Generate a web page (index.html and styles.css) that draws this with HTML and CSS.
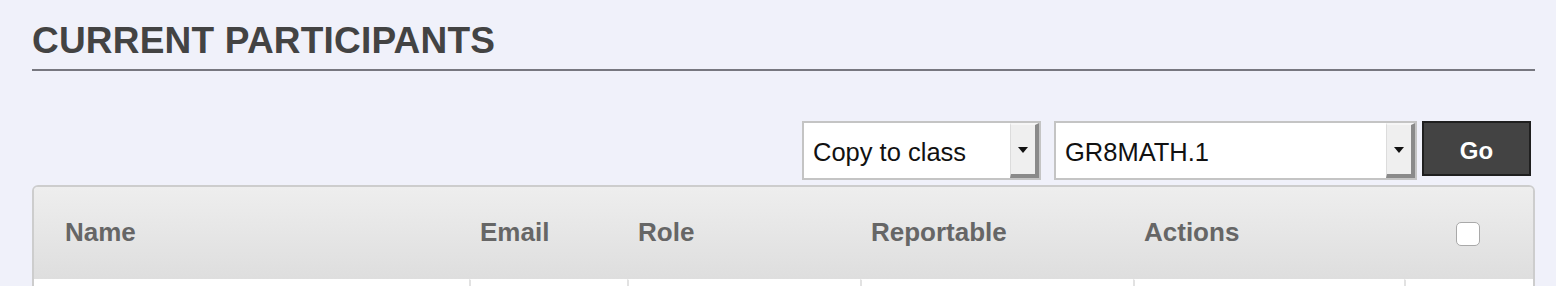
FILE: index.html
```html
<!DOCTYPE html>
<html lang="en">
<head>
  <meta charset="UTF-8">
  <title>Current Participants</title>
  <meta name="viewport" content="width=device-width, initial-scale=1.0">
  <link rel="stylesheet" href="styles.css">
</head>
<body>

<h2 class="titulo">CURRENT PARTICIPANTS</h2>

<div class="barra">
  <div class="selector selector-accion">
    <span class="selector-texto">Copy to class</span>
    <span class="selector-flecha"></span>
  </div>
  <div class="selector selector-clase">
    <span class="selector-texto">GR8MATH.1</span>
    <span class="selector-flecha"></span>
  </div>
  <button class="boton-go">Go</button>
</div>

<table class="participantes">
  <colgroup>
    <col class="col-nombre">
    <col class="col-email">
    <col class="col-rol">
    <col class="col-reportable">
    <col class="col-acciones">
    <col class="col-check">
  </colgroup>
  <thead>
    <tr>
      <th class="primera">Name</th>
      <th>Email</th>
      <th>Role</th>
      <th>Reportable</th>
      <th>Actions</th>
      <th class="centro"><span class="casilla"></span></th>
    </tr>
  </thead>
  <tbody>
    <tr>
      <td></td><td></td><td></td><td></td><td></td><td></td>
    </tr>
  </tbody>
</table>

</body>
</html>
```

FILE: styles.css
```css
body {
  margin: 0;
  padding: 22px 21px 0 32px;
  background: #f0f1fa;
  font-family: "Liberation Sans", Arial, Helvetica, sans-serif;
  color: #444;
}

.titulo {
  margin: 0;
  padding-bottom: 10px;
  font-size: 37px;
  line-height: 37px;
  font-weight: bold;
  color: #434343;
  letter-spacing: 0.2px;
  border-bottom: 2px solid #77777f;
}

/* barra de acciones */
.barra {
  display: flex;
  justify-content: flex-end;
  align-items: flex-start;
  margin-top: 50px;
  padding-right: 4px;
}

.selector {
  display: flex;
  align-items: stretch;
  height: 59px;
  box-sizing: border-box;
  border: 2px solid #c4c4c4;
  background: #fff;
}
.selector-accion { width: 239px; margin-right: 13px; }
.selector-clase { width: 363px; margin-right: 5px; }

.selector-texto {
  flex: 1;
  display: flex;
  align-items: center;
  padding: 4px 0 0 9px;
  font-size: 25.5px;
  color: #111;
}

.selector-flecha {
  position: relative;
  width: 24px;
  background: #efefef;
  border-style: solid;
  border-width: 2px 4px 4px 1px;
  border-color: #f6f6f6 #8a8a8a #8a8a8a #dcdcdc;
}
.selector-flecha::after {
  content: "";
  position: absolute;
  left: 7px;
  top: 22px;
  border-left: 5px solid transparent;
  border-right: 5px solid transparent;
  border-top: 6px solid #111;
}

.boton-go {
  width: 109px;
  height: 55px;
  background: #434343;
  border: 2px solid #1f1f1f;
  color: #fff;
  font-family: "Liberation Sans", Arial, sans-serif;
  font-size: 24px;
  font-weight: bold;
  padding: 5px 0 0 0;
  cursor: pointer;
}

/* tabla */
.participantes {
  width: 100%;
  margin-top: 5px;
  border-collapse: separate;
  border-spacing: 0;
  table-layout: fixed;
  border: 2px solid #cdcdcd;
  border-radius: 6px;
  overflow: hidden;
}
.col-nombre { width: 435px; }
.col-email { width: 158px; }
.col-rol { width: 233px; }
.col-reportable { width: 273px; }
.col-acciones { width: 271px; }

.participantes th {
  height: 90px;
  padding: 0 0 2px 11px;
  text-align: left;
  font-size: 26px;
  font-weight: bold;
  color: #666;
  background: linear-gradient(#eeeeee, #dedede);
}
.participantes th.primera { padding-left: 31px; }
.participantes th.centro { text-align: center; padding-left: 0; }

.casilla {
  display: inline-block;
  width: 22px;
  height: 22px;
  margin: 0 2px 0 0;
  vertical-align: middle;
  background: #fff;
  border: 1px solid #a9a9a9;
  border-radius: 5px;
}

.participantes td {
  height: 48px;
  background: #fff;
  border-top: 1px solid #fff;
  border-left: 2px solid #e2e2e2;
}
.participantes td:first-child { border-left: none; }
```
